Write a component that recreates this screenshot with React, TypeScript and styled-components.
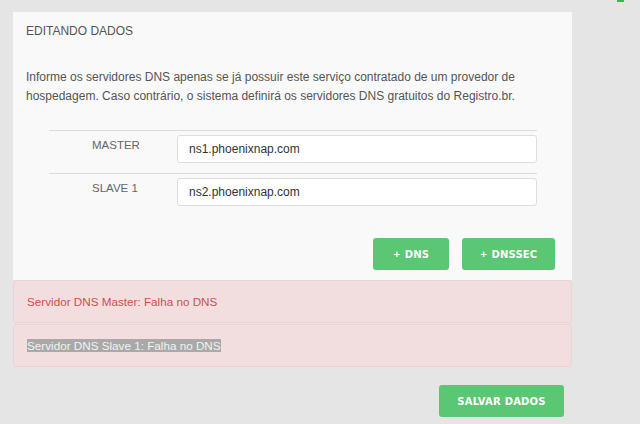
import styled, { createGlobalStyle } from 'styled-components';

const GlobalStyle = createGlobalStyle`
  html, body {
    margin: 0;
    padding: 0;
    background: #e5e5e5;
  }
  body {
    font-family: 'Liberation Sans', Arial, sans-serif;
    color: #555;
  }
`;

interface DnsRow {
  label: string;
  value: string;
}

interface ErrorItem {
  text: string;
  selected?: boolean;
}

const rows: DnsRow[] = [
  { label: 'MASTER', value: 'ns1.phoenixnap.com' },
  { label: 'SLAVE 1', value: 'ns2.phoenixnap.com' },
];

const errors: ErrorItem[] = [
  { text: 'Servidor DNS Master: Falha no DNS' },
  { text: 'Servidor DNS Slave 1: Falha no DNS', selected: true },
];

const Page = styled.div`
  position: relative;
  width: 559px;
  padding: 12px 0 0 13px;
`;

const CornerMark = styled.div`
  position: absolute;
  top: 0;
  left: 617px;
  width: 7px;
  height: 2px;
  background: #2cbf3f;
`;

const Panel = styled.div`
  background: #f9f9f9;
  padding: 12px 17px 10px 13px;
`;

const Title = styled.div`
  font-size: 12px;
  line-height: 14px;
  color: #555;
`;

const Intro = styled.p`
  margin: 30px 0 0;
  font-size: 12px;
  line-height: 19px;
  color: #555;
`;

const DnsTable = styled.div`
  margin: 24px 0 0 23px;
  width: 488px;
`;

const Row = styled.div`
  display: flex;
  border-top: 1px solid #dcdcdc;
  padding: 4px 0 10px;
`;

const Label = styled.div`
  width: 128px;
  box-sizing: border-box;
  padding: 3px 0 0 43px;
  font-size: 11.5px;
  line-height: 14px;
  color: #666;
`;

const Input = styled.input`
  width: 360px;
  height: 28px;
  box-sizing: border-box;
  border: 1px solid #dedede;
  border-radius: 3px;
  background: #fff;
  padding: 0 11px;
  font-family: 'Liberation Sans', Arial, sans-serif;
  font-size: 12px;
  color: #333;
  outline: none;
`;

const Actions = styled.div<{ $gap: number }>`
  display: flex;
  justify-content: flex-end;
  gap: ${(p) => p.$gap}px;
`;

const ButtonBar = styled(Actions)`
  margin-top: 22px;
`;

const GreenButton = styled.button<{ $width: number }>`
  width: ${(p) => p.$width}px;
  height: 32px;
  border: none;
  border-radius: 3px;
  background: #5bc673;
  color: #fff;
  font-family: 'DejaVu Sans', sans-serif;
  font-weight: bold;
  font-size: 10px;
  letter-spacing: 0.2px;
  cursor: pointer;
  display: flex;
  align-items: center;
  justify-content: center;
  gap: 4px;
`;

const Plus = styled.span`
  font-size: 9px;
  line-height: 1;
`;

const ErrorList = styled.div`
  display: flex;
  flex-direction: column;
  gap: 1px;
`;

const ErrorBox = styled.div`
  height: 43px;
  box-sizing: border-box;
  display: flex;
  align-items: center;
  padding: 0 13px;
  background: #f2dedf;
  border: 1px solid #eed3d5;
  border-radius: 3px;
  font-size: 11.7px;
  color: #cd4f4c;
`;

const Selected = styled.span`
  display: inline-block;
  line-height: 13px;
  height: 13px;
  background: #a9a9a9;
  color: #f2f2f2;
`;

const Footer = styled(Actions)`
  margin-top: 18px;
  padding-right: 8px;
`;

export default function App() {
  return (
    <>
      <GlobalStyle />
      <CornerMark />
      <Page>
        <Panel>
          <Title>EDITANDO DADOS</Title>
          <Intro>
            Informe os servidores DNS apenas se já possuir este serviço contratado de um provedor de
            hospedagem. Caso contrário, o sistema definirá os servidores DNS gratuitos do Registro.br.
          </Intro>
          <DnsTable>
            {rows.map((row) => (
              <Row key={row.label}>
                <Label>{row.label}</Label>
                <Input defaultValue={row.value} />
              </Row>
            ))}
          </DnsTable>
          <ButtonBar $gap={13}>
            <GreenButton $width={76}>
              <Plus>+</Plus>DNS
            </GreenButton>
            <GreenButton $width={93}>
              <Plus>+</Plus>DNSSEC
            </GreenButton>
          </ButtonBar>
        </Panel>
        <ErrorList>
          {errors.map((err) => (
            <ErrorBox key={err.text}>
              {err.selected ? <Selected>{err.text}</Selected> : err.text}
            </ErrorBox>
          ))}
        </ErrorList>
        <Footer $gap={0}>
          <GreenButton $width={125}>SALVAR DADOS</GreenButton>
        </Footer>
      </Page>
    </>
  );
}
